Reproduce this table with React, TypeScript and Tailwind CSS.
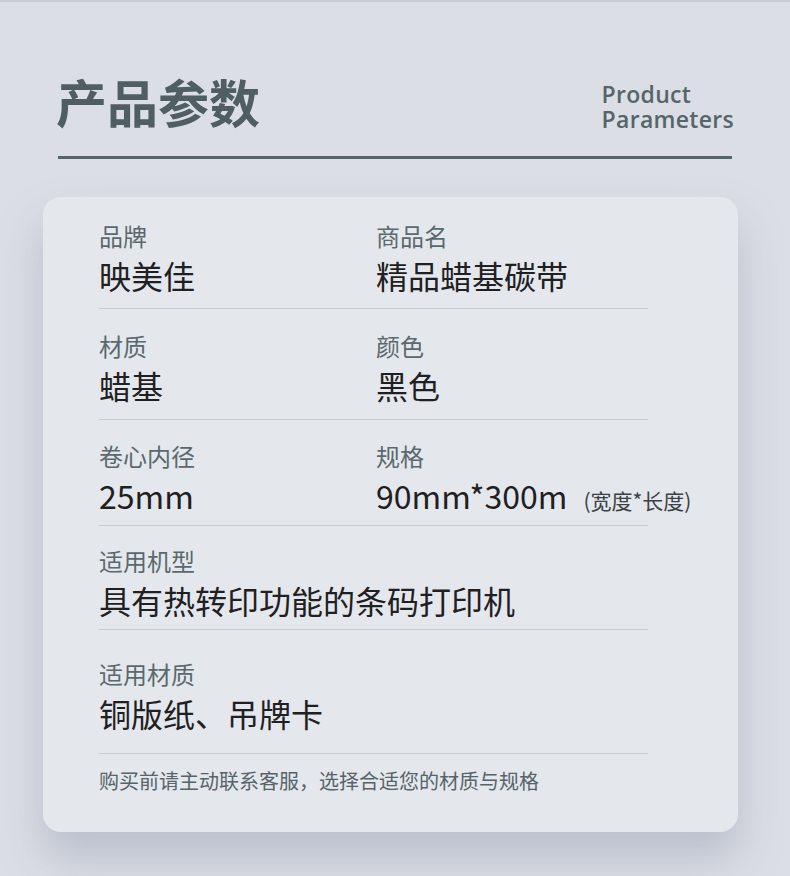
import React from 'react';

type Cell = { label: string; value: React.ReactNode };

type Row = {
  cells: Cell[];
  pad: string; // top / bottom padding, tuned per row
};

const ROWS: Row[] = [
  { cells: [{ label: '品牌', value: '映美佳' }, { label: '商品名', value: '精品蜡基碳带' }], pad: 'pt-[24px] pb-[13px]' },
  { cells: [{ label: '材质', value: '蜡基' }, { label: '颜色', value: '黑色' }], pad: 'pt-[22px] pb-[14px]' },
  {
    cells: [
      { label: '卷心内径', value: '25mm' },
      {
        label: '规格',
        value: (
          <>
            90mm*300m
            <span className="ml-[16px] text-[21px] leading-[20px] text-[#3a4245]">(宽度*长度)</span>
          </>
        ),
      },
    ],
    pad: 'pt-[21px] pb-[10px]',
  },
  { cells: [{ label: '适用机型', value: '具有热转印功能的条码打印机' }], pad: 'pt-[20px] pb-[9px]' },
  { cells: [{ label: '适用材质', value: '铜版纸、吊牌卡' }], pad: 'pt-[29px] pb-[20px]' },
];

const cjk = { fontFamily: '"Noto Sans CJK SC", "Noto Sans", sans-serif' };

export default function App() {
  return (
    <div className="w-[790px] h-[876px] bg-[#dbdee5] border-t-2 border-[#c9ccd4] overflow-hidden" style={cjk}>
      {/* header */}
      <div className="flex items-end justify-between px-[58px] pt-[67px] pb-[23px]">
        <h1 className="-ml-[2px] text-[51px] leading-[64px] font-bold text-[#4e5e63]">产品参数</h1>
        <div
          className="text-[23px] leading-[25px] font-semibold tracking-[0.3px] text-[#56656a] mb-[1px] -mr-[2px]"
          style={{ fontFamily: '"Open Sans", sans-serif' }}
        >
          Product
          <br />
          Parameters
        </div>
      </div>
      <div className="mx-[58px] h-[3px] bg-[#56656a]" />

      {/* card */}
      <div className="ml-[43px] mt-[38px] w-[695px] rounded-[18px] bg-[#e4e7ec] px-[56px] pb-[37px] shadow-[0_26px_44px_rgba(140,148,170,0.42)]">
        <div className="w-[549px]">
          {ROWS.map((row, i) => (
            <div key={i} className={`flex border-b border-[#c8ccd3] ${row.pad}`}>
              {row.cells.map((c, j) => (
                <div
                  key={j}
                  className={row.cells.length > 1 && j === 0 ? 'w-[277px] shrink-0' : 'flex-1 whitespace-nowrap'}
                >
                  <div className="text-[24px] leading-[30px] text-[#5b696e] mb-[4px]">{c.label}</div>
                  <div className="text-[32px] leading-[40px] text-[#1e2022]">{c.value}</div>
                </div>
              ))}
            </div>
          ))}
        </div>
        <p className="pt-[13px] text-[20px] leading-[28px] text-[#56636a]">
          购买前请主动联系客服，选择合适您的材质与规格
        </p>
      </div>
    </div>
  );
}
